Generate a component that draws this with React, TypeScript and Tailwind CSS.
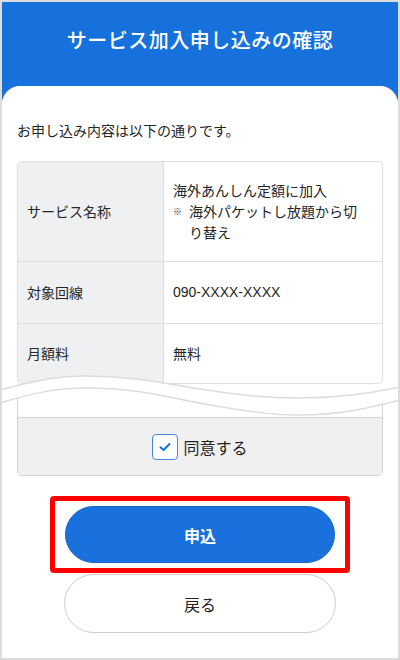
export default function App() {
  const font = { fontFamily: '"Noto Sans CJK JP", "Noto Sans", sans-serif' };
  return (
    <div
      className="w-[400px] h-[660px] border-2 border-[#dcdcdc] bg-white flex flex-col overflow-hidden text-[#262626]"
      style={font}
    >
      <header className="h-[98px] bg-[#1671dc] pt-[24px] text-center">
        <h1 className="text-[20px] leading-[28px] tracking-[0.5px] font-medium text-white">
          サービス加入申し込みの確認
        </h1>
      </header>

      <main className="relative -mt-[14px] flex-1 bg-white rounded-t-[18px] px-[15px] pt-[34px]">
        <p className="text-[14px] leading-[20px]">お申し込み内容は以下の通りです。</p>

        <div className="mt-[21px] border border-[#dedede] rounded-[5px] overflow-hidden text-[14px]">
          <div className="grid grid-cols-[146px_1fr] h-[99px]">
            <div className="bg-[#eff0f2] border-r border-[#dedede] flex items-center pl-[9px]">サービス名称</div>
            <div className="flex flex-col justify-center pl-[9px] pr-[24px] leading-[21px]">
              <div>海外あんしん定額に加入</div>
              <div className="flex">
                <span className="w-[16px] shrink-0 text-[9px] leading-[21px]">※</span>
                <span>海外パケットし放題から切り替え</span>
              </div>
            </div>
          </div>
          <div className="grid grid-cols-[146px_1fr] h-[62px] border-t border-[#dedede]">
            <div className="bg-[#eff0f2] border-r border-[#dedede] flex items-center pl-[9px]">対象回線</div>
            <div className="flex items-center pl-[9px]" style={{ fontFamily: '"Liberation Sans", "Noto Sans CJK JP", sans-serif' }}>
              090-XXXX-XXXX
            </div>
          </div>
          <div className="grid grid-cols-[146px_1fr] h-[60px] border-t border-[#dedede]">
            <div className="bg-[#eff0f2] border-r border-[#dedede] flex items-center pl-[9px]">月額料</div>
            <div className="flex items-center pl-[9px]">無料</div>
          </div>
        </div>

        <div className="mt-[8px] border-x border-b border-[#d6d6d6] rounded-b-[5px] overflow-hidden">
          <div className="h-[25px] bg-white" />
          <div className="h-[58px] bg-[#f0f0f0] border-t border-[#d6d6d6] flex items-center justify-center gap-[5px]">
            <span className="w-[26px] h-[26px] rounded-[4px] border-[1.5px] border-[#3d88e1] bg-white flex items-center justify-center">
              <svg width="12" height="10" viewBox="0 0 12 10">
                <path d="M1.5 5.2 L4.6 8 L10.5 2" fill="none" stroke="#1a6fd9" strokeWidth="2" strokeLinecap="round" strokeLinejoin="round" />
              </svg>
            </span>
            <span className="text-[16px] leading-[24px] text-[#222]">同意する</span>
          </div>
        </div>

        <svg
          className="absolute left-0 top-[284px]"
          width="396"
          height="50"
          viewBox="2 370 396 50"
        >
          <path
            d="M0,390 C30,382 55,376 85,376 C135,376 165,384 200,389 C240,395 265,398 300,398 C340,398 370,393 400,387 L400,400 C370,408 340,415 300,415 C270,415 245,411 205,404 C170,398 140,388 85,388 C55,388 30,394 0,403 Z"
            fill="#ffffff"
          />
          <path
            d="M0,390 C30,382 55,376 85,376 C135,376 165,384 200,389 C240,395 265,398 300,398 C340,398 370,393 400,387"
            fill="none"
            stroke="#dcdcdc"
            strokeWidth="1.5"
          />
          <path
            d="M0,403 C30,394 55,388 85,388 C140,388 170,398 205,404 C245,411 270,415 300,415 C340,415 370,408 400,400"
            fill="none"
            stroke="#dcdcdc"
            strokeWidth="1.5"
          />
        </svg>

        <div className="mt-[20px] mx-auto w-[300px] border-[5px] border-[#ff0000] rounded-[4px] px-[10px] py-[5px]">
          <button className="w-full h-[57px] rounded-full bg-[#1a70dc] border border-[#1563c6] text-white text-[16px] font-bold">
            申込
          </button>
        </div>
        <div className="mt-[1px] flex justify-center">
          <button className="w-[272px] h-[59px] rounded-full bg-white border border-[#cccccc] text-[#222] text-[16px]">
            戻る
          </button>
        </div>
      </main>
    </div>
  );
}
